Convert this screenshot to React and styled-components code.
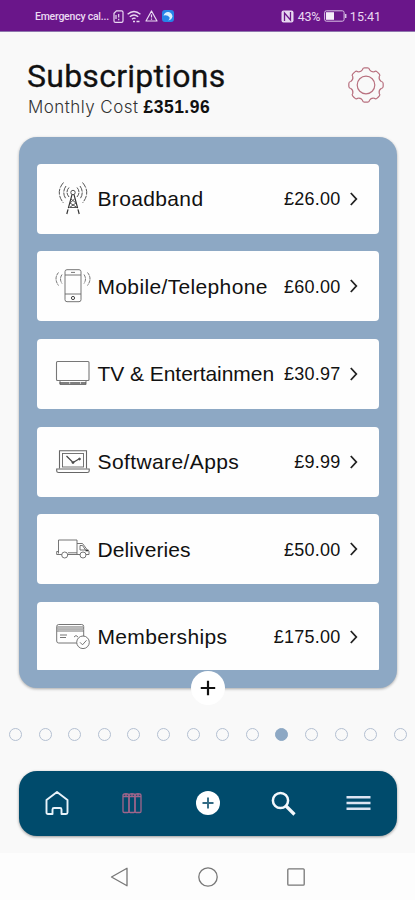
import styled, { createGlobalStyle } from "styled-components";

const subscriptions = [
  { icon: "broadband", label: "Broadband", price: "£26.00" },
  { icon: "mobile", label: "Mobile/Telephone", price: "£60.00" },
  { icon: "tv", label: "TV & Entertainmen", price: "£30.97", tracking: -0.05 },
  { icon: "software", label: "Software/Apps", price: "£9.99", tracking: 0.4 },
  { icon: "delivery", label: "Deliveries", price: "£50.00", tracking: 0.1 },
  { icon: "card", label: "Memberships", price: "£175.00" },
];

const PAGE_COUNT = 14;
const ACTIVE_PAGE = 9;

/* ────────────────────── Styled Components ────────────────────── */
const GlobalStyle = createGlobalStyle`
  * {
    box-sizing: border-box;
  }

  body {
    margin: 0;
    background: #f9f9f9;
    font-family: "Liberation Sans", Arial, sans-serif;
    color: #111;
  }

  svg {
    display: block;
    flex: none;
    fill: none;
    overflow: visible;
  }

  button {
    padding: 0;
    border: 0;
    background: none;
    color: inherit;
  }
`;

const Screen = styled.div`
  display: flex;
  flex-direction: column;
  width: 415px;
  height: 900px;
  overflow: hidden;
  background: #f9f9f9;
`;

const StatusBar = styled.div`
  display: flex;
  align-items: center;
  justify-content: space-between;
  height: 32px;
  padding: 1px 34px 0 35px;
  border-bottom: 1px solid #8e76ad;
  background: #6a168a;
  color: #ead9f2;
  font-family: Roboto, sans-serif;
`;

const StatusGroup = styled.div`
  display: flex;
  align-items: center;
  gap: ${(p) => p.$gap}px;
`;

const Carrier = styled.span`
  font-size: 10.5px;
  font-weight: 500;
  letter-spacing: -0.23px;
`;

const StatusText = styled.span`
  font-size: 12.5px;
  letter-spacing: ${(p) => p.$spacing || 0}px;
`;

const Header = styled.header`
  display: flex;
  justify-content: space-between;
  height: 105px;
  padding: 26px 31.5px 0 27px;
`;

const Title = styled.h1`
  margin: 0;
  font-family: Roboto, sans-serif;
  font-size: 32px;
  font-weight: 400;
  line-height: 37px;
  letter-spacing: 0.25px;
  -webkit-text-stroke: 0.3px #111;
`;

const Cost = styled.p`
  display: flex;
  gap: 5px;
  margin: 1px 0 0 1px;
  font-size: 17.5px;
  line-height: 22px;

  span {
    font-family: Inter, sans-serif;
    font-size: 17px;
    font-weight: 300;
    letter-spacing: 0.45px;
    color: #333;
  }

  b {
    letter-spacing: 0.5px;
  }
`;

const SettingsButton = styled.button`
  align-self: flex-start;
  margin-top: 9px;
`;

const Panel = styled.main`
  position: relative;
  display: flex;
  flex-direction: column;
  height: 551px;
  margin: 0 18.5px 0 19px;
  padding: 26.5px 18px 18px;
  border-radius: 18px;
  background: #8da8c4;
  box-shadow: 0 1px 3px rgba(0, 0, 0, 0.32);
`;

const List = styled.div`
  display: flex;
  flex-direction: column;
  gap: 17.7px;
  overflow: hidden;
`;

const Row = styled.div`
  display: flex;
  flex: none;
  align-items: center;
  height: 70px;
  padding: 0 16.5px 0 17.5px;
  border-radius: 4px;
  background: #fefefe;
`;

const RowLabel = styled.span`
  margin-left: 7px;
  padding-top: 1px;
  font-size: 21px;
  line-height: 30px;
  letter-spacing: ${(p) => p.$tracking ?? 0.35}px;
  white-space: nowrap;
`;

const Price = styled.span`
  margin-left: auto;
  padding-top: 1px;
  font-size: 18px;
  line-height: 30px;
  letter-spacing: 0.25px;
`;

const ChevronBox = styled.span`
  margin-left: 5.5px;
`;

const AddButton = styled.button`
  position: absolute;
  bottom: -17px;
  left: 50%;
  display: flex;
  align-items: center;
  justify-content: center;
  width: 34px;
  height: 34px;
  margin-left: -17px;
  border-radius: 50%;
  background: #fff;
`;

const Pager = styled.div`
  display: flex;
  align-items: center;
  justify-content: space-between;
  height: 83px;
  padding: 10px 8px 0 9px;
`;

const Dot = styled.span`
  width: 13px;
  height: 13px;
  border: 1.3px solid ${(p) => (p.$active ? "#8da8c4" : "#b4c0d2")};
  border-radius: 50%;
  background: ${(p) => (p.$active ? "#8da8c4" : "transparent")};
`;

const TabBar = styled.nav`
  display: flex;
  height: 64.5px;
  margin: 0 18.5px 0 19px;
  border-radius: 18px;
  background: #004b6c;
  box-shadow: 0 1px 3px rgba(0, 0, 0, 0.4);
`;

const Tab = styled.button`
  display: flex;
  flex: 1;
  align-items: center;
  justify-content: center;
`;

const SystemBar = styled.div`
  display: flex;
  flex: 1;
  align-items: center;
  justify-content: space-between;
  margin-top: 17px;
  padding: 2px 110px 0;
  background: #fdfdfd;
`;
/* ──────────────────────────────────────────────────────────────── */

/* ────────────────────── Icons ────────────────────── */
const line = { stroke: "#666", strokeWidth: 0.9 };

// row icons share a 36x36 box
const drawings = {
  broadband: (
    <g {...line} stroke="#555" strokeWidth="1">
      <circle cx="18" cy="11.5" r="2.2" />
      <path d="M14 6.500q-4 4.500 0 9.500M22 6.500q4 4.500 0 9.500" strokeDasharray="5 .8" />
      <path d="M11 5q-4.500 6.500 0 13M25 5q4.500 6.500 0 13" strokeDasharray="6 1" />
      <path d="M8.500 1.500q-8.500 10 0 20.500M27.500 1.500q8.500 10 0 20.500" strokeDasharray="6 1.200" />
      <path d="M17 13.700L11.800 33M19 13.700L24.200 33" stroke="#333" strokeWidth="1.200" strokeDasharray="14 1.200" />
      <path d="M16 18l5 4-6.500 4.500h7.500l-7-4.500 4.500-4" />
    </g>
  ),
  mobile: (
    <g {...line}>
      <rect x="10" y="1.700" width="16" height="32" rx="2" />
      <path d="M10 7h16M10 26h16M16 4.400h4" />
      <circle cx="18" cy="30" r="1.600" stroke="#333" />
      <path d="M7 6.500q-3 4.500 0 9M3.500 4.500q-5 6 0 13M29 6.500q3 4.500 0 9M32.500 4.500q5 6 0 13" strokeDasharray="3.500 .7" />
    </g>
  ),
  tv: (
    <g {...line}>
      <rect x="1.500" y="5.500" width="32.500" height="19" rx="1" stroke="#777" strokeWidth="1.100" />
      <path d="M5 25v3.500h26V25" />
      <path d="M4.500 27h26.500" stroke="#555" strokeWidth="1.600" strokeDasharray="10 .6" />
    </g>
  ),
  software: (
    <g {...line}>
      <path d="M4.500 24.500V6.700h27V24.500" strokeWidth="1.100" />
      <rect x="7.500" y="9.500" width="21" height="13.500" />
      <path d="M1.700 25h32.500v2q0 1.500-2 1.500H3.700q-2 0-2-1.500z" strokeWidth="1.100" />
      <path d="M11.500 12l6.500 6.500 6-3.500" stroke="#444" strokeWidth="1.200" />
      <circle cx="18" cy="18.500" r="1.100" fill="#333" />
      <circle cx="24.500" cy="15" r="1" fill="#333" />
    </g>
  ),
  delivery: (
    <g {...line}>
      <path d="M3.500 22.500V9H22V23.500H13M7 23.500H1.700v-3H3.500" />
      <path d="M22 12.500h5.500l4.500 6 2 2v3h-3M22 23.500h3M25 14.500h2.500l3 4.500H25z" />
      <path d="M30.500 19.500h3" stroke="#333" strokeWidth="1.600" />
      <circle cx="9.700" cy="24" r="3" fill="#fefefe" />
      <circle cx="28" cy="24" r="3" fill="#fefefe" />
      <path d="M13 21.800h9" />
    </g>
  ),
  card: (
    <g {...line}>
      <rect x="1.700" y="5.500" width="27" height="18.500" rx="2" />
      <path d="M2 9h26.500M2 12h26.500M5 16h7M5 18.500h6M19 18q2-3 4 0" />
      <path d="M2 7.500h26.500M2 10.500h26.500" stroke="#aaa" />
      <circle cx="28" cy="23.300" r="6.300" fill="#fefefe" />
      <path d="M25 23.300l2.500 2.500 4-4.500" />
    </g>
  ),
};

const RowIcon = ({ name }) => (
  <svg width="36" height="36" viewBox="0 0 36 36">
    {drawings[name]}
  </svg>
);

const Chevron = () => (
  <svg width="16" height="16" viewBox="0 0 16 16" stroke="#222" strokeWidth="1.8">
    <path d="M4.800 2l5.500 6-5.500 6" />
  </svg>
);

const polar = (radius, deg) => {
  const rad = (deg * Math.PI) / 180;
  return `${(18 + radius * Math.sin(rad)).toFixed(2)} ${(18 - radius * Math.cos(rad)).toFixed(2)}`;
};

// eight rounded teeth with a small scooped notch between each pair
const gearPath =
  Array.from({ length: 8 })
    .map((_, idx) => {
      const a = idx * 45;
      return `${idx ? "L" : "M"}${polar(15.6, a - 13)}Q${polar(17.4, a - 11)} ${polar(17.2, a - 6)}A17.2 17.2 0 0 1 ${polar(17.2, a + 6)}Q${polar(17.4, a + 11)} ${polar(15.6, a + 13)}Q${polar(13.6, a + 22.5)} ${polar(15.6, a + 32)}`;
    })
    .join("") + "Z";

const GearIcon = () => (
  <svg width="36" height="36" viewBox="0 0 36 36" stroke="#b8707f" strokeWidth="1.2" strokeLinejoin="round">
    <circle cx="18" cy="18" r="8.800" />
    <path d={gearPath} />
  </svg>
);

const SimIcon = () => (
  <svg width="11" height="13" viewBox="0 0 11 13" stroke="currentColor" strokeWidth="1.200">
    <path d="M3.500.8H8.500q1.500 0 1.500 1.500V11q0 1.300-1.500 1.300h-6Q1 12.300 1 11V3.300z" />
    <path d="M5.700 4v3.500M5.700 8.800v1.400M3 5v4" />
  </svg>
);

const WifiIcon = () => (
  <svg width="14" height="13" viewBox="0 0 14 13" stroke="currentColor" strokeWidth="1.400">
    <path d="M.6 4.300q6.400-5.600 12.800 0M2.800 6.800q4.200-3.600 8.400 0M5 9.200q2-1.800 3.500-.6" />
    <path d="M6 11.500h2M9.500 11.500h3" />
  </svg>
);

const AlertIcon = () => (
  <svg width="13" height="12" viewBox="0 0 13 12" stroke="currentColor" strokeWidth="1.200" strokeLinejoin="round">
    <path d="M6.500 1l5.500 10H1zM6.500 4.500v3M6.500 8.500v1.200" />
  </svg>
);

const BirdBadge = () => (
  <svg width="12" height="12" viewBox="0 0 12 12">
    <rect width="12" height="12" rx="3" fill="#2684e8" />
    <path d="M1.500 5.500q1.500-4 5-3.500 3.500.8 4 4.500-.8 3.500-4.300 4 2-1.500 1.300-3.200Q5.500 4.500 1.500 5.500z" fill="#d8eeff" />
  </svg>
);

const NfcIcon = () => (
  <svg width="13" height="13" viewBox="0 0 13 13">
    <rect x=".5" y=".5" width="12" height="12" rx="2" fill="#e7d8f0" />
    <path d="M3.500 11V3l6 7V2" stroke="#6a168a" strokeWidth="1.300" />
  </svg>
);

const BatteryIcon = () => (
  <svg width="23" height="12" viewBox="0 0 23 12">
    <rect x=".6" y=".8" width="19.500" height="10.400" rx="1.800" stroke="#d9c3e5" />
    <rect x="2" y="2.200" width="8" height="7.600" fill="#f4ecf8" />
    <path d="M21.700 4v4" stroke="#d9c3e5" strokeWidth="1.500" />
  </svg>
);

const HomeIcon = () => (
  <svg width="24" height="26" viewBox="0 0 24 26" stroke="#e8f3fa" strokeWidth="1.900" strokeLinejoin="round">
    <path d="M12 2l10.500 8v12.500q0 1.500-1.500 1.500h-4.500v-4.500Q16.500 18 15 18H9q-1.500 0-1.500 1.500V24H3q-1.500 0-1.500-1.500V10z" />
  </svg>
);

const BindersIcon = () => (
  <svg width="20" height="22" viewBox="0 0 20 22" stroke="#a0658b" strokeWidth="1.300">
    <rect x="1" y="2" width="6" height="18.500" rx="1.200" />
    <rect x="7" y="2" width="6" height="18.500" rx="1.200" />
    <rect x="13" y="2" width="6" height="18.500" rx="1.200" />
    <path d="M1 4.500h18M4 1v3M10 1v3M16 1v3" />
  </svg>
);

const PlusCircleIcon = () => (
  <svg width="24" height="24" viewBox="0 0 24 24">
    <circle cx="12" cy="12" r="12" fill="#fff" />
    <path d="M12 6.500v11M6.500 12h11" stroke="#326a83" strokeWidth="1.900" />
  </svg>
);

const SearchIcon = () => (
  <svg width="25" height="25" viewBox="0 0 25 25" stroke="#f3f8fc">
    <circle cx="9.500" cy="9.500" r="7.600" strokeWidth="2.500" />
    <path d="M14.500 14.500l9 9" strokeWidth="3.200" />
  </svg>
);

const MenuIcon = () => (
  <svg width="25" height="16" viewBox="0 0 25 16" stroke="#dce4f2" strokeWidth="2.400">
    <path d="M.5 2.200h24M.5 8h24M.5 13.800h24" />
  </svg>
);

const tabs = [
  { name: "Home", icon: <HomeIcon /> },
  { name: "Folders", icon: <BindersIcon /> },
  { name: "Add", icon: <PlusCircleIcon /> },
  { name: "Search", icon: <SearchIcon /> },
  { name: "Menu", icon: <MenuIcon /> },
];
/* ──────────────────────────────────────────────────────────────── */

const App = () => (
  <>
    <GlobalStyle />
    <Screen>
      <StatusBar>
        <StatusGroup $gap={3.7}>
          <Carrier>Emergency cal...</Carrier>
          <SimIcon />
          <WifiIcon />
          <AlertIcon />
          <BirdBadge />
        </StatusGroup>
        <StatusGroup $gap={3.3}>
          <NfcIcon />
          <StatusText $spacing={-0.2}>43%</StatusText>
          <BatteryIcon />
          <StatusText>15:41</StatusText>
        </StatusGroup>
      </StatusBar>

      <Header>
        <div>
          <Title>Subscriptions</Title>
          <Cost>
            <span>Monthly Cost</span>
            <b>£351.96</b>
          </Cost>
        </div>
        <SettingsButton aria-label="Settings">
          <GearIcon />
        </SettingsButton>
      </Header>

      <Panel>
        <List>
          {subscriptions.map((item) => (
            <Row key={item.icon}>
              <RowIcon name={item.icon} />
              <RowLabel $tracking={item.tracking}>{item.label}</RowLabel>
              <Price>{item.price}</Price>
              <ChevronBox>
                <Chevron />
              </ChevronBox>
            </Row>
          ))}
        </List>
        <AddButton aria-label="Add subscription">
          <svg width="16" height="16" viewBox="0 0 16 16" stroke="#111" strokeWidth="2.200">
            <path d="M8 .8v14.400M.8 8h14.400" />
          </svg>
        </AddButton>
      </Panel>

      <Pager>
        {Array.from({ length: PAGE_COUNT }).map((_, idx) => (
          <Dot key={idx} $active={idx === ACTIVE_PAGE} />
        ))}
      </Pager>

      <TabBar>
        {tabs.map((tab) => (
          <Tab key={tab.name} aria-label={tab.name}>
            {tab.icon}
          </Tab>
        ))}
      </TabBar>

      <SystemBar>
        <svg width="18" height="20" viewBox="0 0 18 20" stroke="#777" strokeWidth="1.300" strokeLinejoin="round">
          <path d="M1.500 10L17 1.200v17.600z" />
        </svg>
        <svg width="20" height="20" viewBox="0 0 20 20" stroke="#777" strokeWidth="1.300">
          <circle cx="10" cy="10" r="9.200" />
        </svg>
        <svg width="18" height="18" viewBox="0 0 18 18" stroke="#777" strokeWidth="1.300">
          <rect x=".8" y=".8" width="16.400" height="16.400" rx="1" />
        </svg>
      </SystemBar>
    </Screen>
  </>
);

export default App;
